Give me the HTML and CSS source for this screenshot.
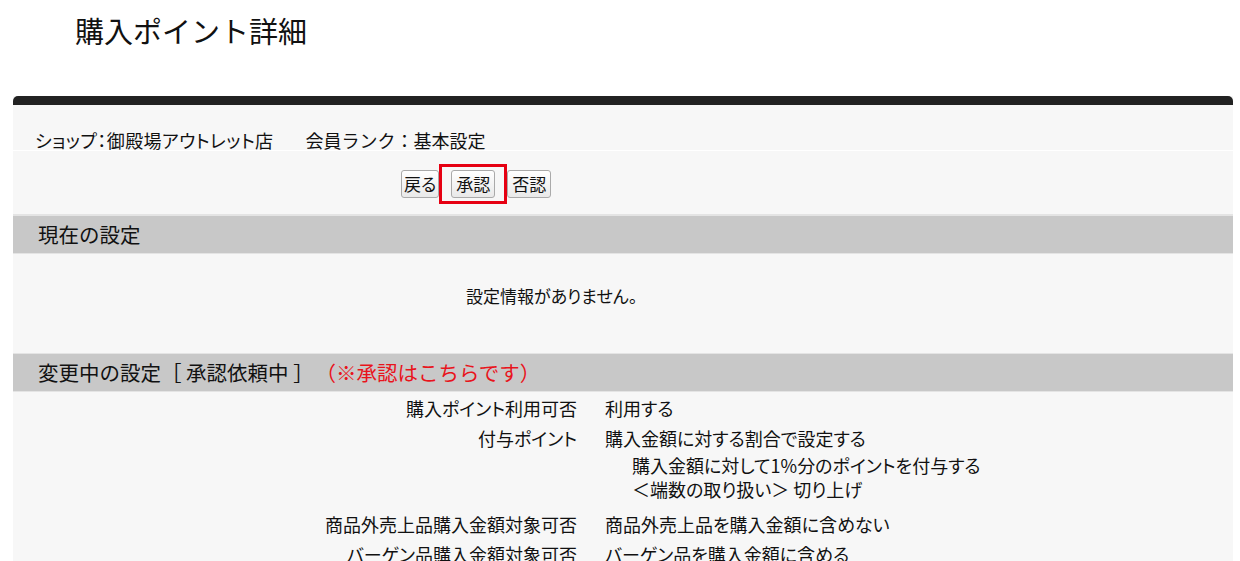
FILE: index.html
```html
<!DOCTYPE html>
<html lang="ja">
  <head>
    <meta charset="utf-8">
    <title>購入ポイント詳細</title>
    <link rel="stylesheet" href="styles.css">
  </head>
  <body>
    <h1 class="page-title">購入ポイント詳細</h1>

    <div class="panel">
      <div class="panel-bar"></div>

      <div class="shop-line">
        <span class="shop">ショップ：御殿場アウトレット店</span>
        <span class="rank">会員ランク：基本設定</span>
      </div>

      <div class="actions">
        <button class="btn btn-back">戻る</button>
        <div class="highlight">
          <button class="btn">承認</button>
        </div>
        <button class="btn">否認</button>
      </div>

      <h2 class="section-head">現在の設定</h2>
      <div class="empty">設定情報がありません。</div>

      <h2 class="section-head">変更中の設定［ 承認依頼中 ］<span class="note">（※承認はこちらです）</span></h2>
      <div class="rows">
        <div class="label">購入ポイント利用可否</div>
        <div class="value">利用する</div>

        <div class="label">付与ポイント</div>
        <div class="value">
          購入金額に対する割合で設定する
          <div class="sub">
            <div>購入金額に対して1%分のポイントを付与する</div>
            <div>＜端数の取り扱い＞ 切り上げ</div>
          </div>
        </div>

        <div class="label">商品外売上品購入金額対象可否</div>
        <div class="value">商品外売上品を購入金額に含めない</div>

        <div class="label">バーゲン品購入金額対象可否</div>
        <div class="value">バーゲン品を購入金額に含める</div>
      </div>
    </div>
  </body>
</html>
```

FILE: styles.css
```css
body {
    margin: 0;
    font-family: "Noto Sans CJK JP", "Noto Sans", sans-serif;
    font-feature-settings: "palt";
    color: #111;
    background: #fff;
}

.page-title {
    margin: 0;
    padding: 13px 0 0 75px;
    height: 96px;
    box-sizing: border-box;
    font-size: 29px;
    font-weight: normal;
    font-feature-settings: normal;
    line-height: 34px;
}

.panel {
    margin-left: 13px;
    width: 1220px;
    background: #f7f7f7;
}

.panel-bar {
    height: 9px;
    background: #222;
    border-radius: 5px 5px 0 0;
}

.shop-line {
    padding: 24px 22px 0;
    height: 46px;
    box-sizing: border-box;
    font-size: 18px;
    line-height: 22px;
    border-bottom: 1px solid #fff;
}

.shop {
    letter-spacing: 0.4px;
}

.rank {
    margin-left: 28px;
    font-feature-settings: normal;
}

.actions {
    display: flex;
    align-items: center;
    padding: 13px 0 10px 388px;
    border-bottom: 2px solid #e4e4e4;
}

.btn {
    height: 28px;
    padding: 0 4px;
    font-family: inherit;
    font-feature-settings: "palt";
    font-size: 17px;
    line-height: 26px;
    color: #111;
    background: linear-gradient(#fff, #e9e9e9);
    border: 1px solid #aaa;
    border-radius: 3px;
}

.btn-back {
    padding: 0 2px;
}

.highlight {
    display: flex;
    align-items: center;
    height: 40px;
    padding: 0 9px;
    box-sizing: border-box;
    border: 3px solid #e60012;
}

.section-head {
    margin: 0;
    height: 37px;
    padding-left: 25px;
    font-size: 20.5px;
    font-weight: normal;
    font-feature-settings: normal;
    line-height: 37px;
    background: #c8c8c8;
    border-bottom: 1px solid #e4e4e4;
}

.note {
    margin-left: 12px;
    color: #e8141c;
}

.empty {
    height: 99px;
    padding-left: 453px;
    font-size: 17px;
    line-height: 84px;
    border-bottom: 1px solid #e4e4e4;
}

.rows {
    display: grid;
    grid-template-columns: 564px 1fr;
    column-gap: 28px;
    row-gap: 6px;
    padding-top: 4px;
    font-size: 18px;
    line-height: 24px;
}

.label {
    text-align: right;
}

.sub {
    margin: 3px 0 5px;
    padding-left: 27px;
}
```
